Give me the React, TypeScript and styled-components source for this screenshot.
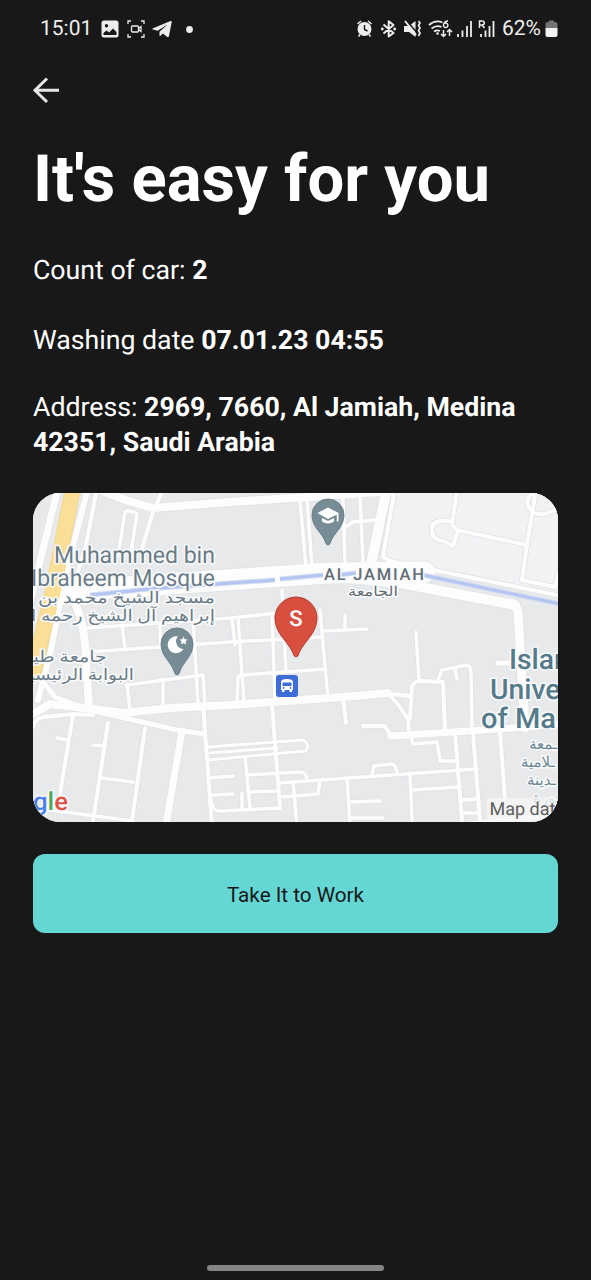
import React from "react";
import styled, { createGlobalStyle } from "styled-components";

const GlobalStyle = createGlobalStyle`
  * { box-sizing: border-box; }
  body { margin: 0; background: #181818; }
`;

const Screen = styled.div`
  display: flex;
  flex-direction: column;
  width: 100%;
  max-width: 591px;
  height: 1280px;
  background: #181818;
  color: #fff;
  font-family: Roboto, "Liberation Sans", sans-serif;
  text-rendering: geometricPrecision;
`;

const StatusBar = styled.header`
  display: flex;
  align-items: center;
  justify-content: space-between;
  height: 58px;
  padding: 0 33px 0 40px;
  color: #ededed;
`;

const StatusGroup = styled.div<{ $gap: number }>`
  display: flex;
  align-items: center;
  gap: ${(p) => p.$gap}px;
`;

const StatusText = styled.span<{ $width: number }>`
  width: ${(p) => p.$width}px;
  font-size: 21px;
  line-height: 26px;
  white-space: nowrap;
`;

const StatusIcon = styled.svg`
  display: block;
  flex: none;
  overflow: visible;
`;

const DotSlot = styled.div`
  margin-left: 6px;
`;

const Content = styled.main`
  display: flex;
  flex-direction: column;
  flex: 1;
  padding: 18px 33px 0;
`;

const BackButton = styled.button`
  width: 28px;
  height: 28px;
  padding: 0;
  border: 0;
  background: none;
  color: #e6e6e6;
`;

const Title = styled.h1`
  margin: 37px 0 0;
  font-size: 65.2px;
  font-weight: 700;
  line-height: 76px;
  white-space: nowrap;
`;

const Detail = styled.p<{ $top: number }>`
  margin: ${(p) => p.$top}px 0 0;
  font-size: 26.7px;
  line-height: 34.5px;
`;

const MapCard = styled.div`
  width: 525px;
  height: 329px;
  margin-top: 34px;
  border-radius: 27px;
  overflow: hidden;
  background: #e8e9eb;
`;

const MapSvg = styled.svg`
  display: block;
`;

const Label = styled.text<{ $size: number; $color?: string; $weight?: number }>`
  font-family: Roboto, "DejaVu Sans", sans-serif;
  font-size: ${(p) => p.$size}px;
  font-weight: ${(p) => p.$weight ?? 400};
  fill: ${(p) => p.$color ?? "#6a7c87"};
  stroke: #fafbfc;
  stroke-width: 3px;
  stroke-linejoin: round;
  paint-order: stroke;
`;

const PlainLabel = styled(Label)`
  stroke: none;
`;

const ActionButton = styled.button`
  width: 525px;
  height: 79px;
  margin-top: 32px;
  padding: 2px 0 0;
  border: 0;
  border-radius: 12px;
  background: #64d7d4;
  color: #181818;
  font-family: inherit;
  font-size: 20.7px;
`;

const HomeArea = styled.footer`
  display: flex;
  justify-content: center;
  height: 15px;
`;

const HomeHandle = styled.div`
  width: 177px;
  height: 6px;
  border-radius: 3px;
  background: #858585;
`;

type Road = [string, number];

const LANE = 3.5;

const roads: Road[] = [
  ["M58 488L30 602", 7],
  ["M88 488L65 577L51 650L38 700", 6],
  ["M97 488L86 545L72 592", 4],
  ["M102 491L128 501L153 508L230 502L310 497L392 491", 8],
  ["M163 490L153 512L141 552", 4],
  ["M118 556L125 512Q131 509 137 514L131 552", LANE],
  ["M68 592Q82 610 85 645L89 709", 8],
  ["M60 592L210 581L330 573L425 572", 21],
  ["M387 488L370 569", 10],
  ["M395 488L383 557L390 561L562 596", 4],
  ["M340 577L400 583L515 605", 10],
  ["M509 603Q517 604 518 613L525 728", 9],
  ["M300 500L306 567M307 499L312 567", LANE],
  ["M343 498L345 562M360 496L363 563M343 529L353 522L377 520", LANE],
  ["M457 490L452 525L457 530L527 545", 4],
  ["M452 521H439Q431 523 432 532Q433 540 443 541L453 546L458 531", 4],
  ["M536 490L527 545L522 580L555 587L561 565", 4],
  ["M532 494Q526 498 528 506Q534 516 545 514L558 509", 4],
  ["M88 628L230 618L277 613M88 652L230 642L323 637", LANE],
  ["M122 625L125 648M193 618L198 704M160 625L161 648", LANE],
  ["M232 618L235 645M238 618L244 702M272 613L275 701", LANE],
  ["M282 590L286 672M320 610L328 699M345 615V629M325 631L367 629", LANE],
  ["M237 703L238 677L242 675L325 669M127 685L203 675L205 705", LANE],
  ["M127 684L130 710M163 679V706", LANE],
  ["M30 716L50 704L93 709L123 713L170 708L230 705L343 697L388 693", 8],
  ["M43 682L55 697L90 710L177 730L204 734", 5],
  ["M33 727Q35 718 44 717L73 714L93 715", 4],
  ["M73 715L60 794M108 723L93 821M145 728L132 821", 4],
  ["M182 731L166 825", 7],
  ["M57 738L67 740M93 745L105 746M102 778L133 782M50 810L133 821", LANE],
  ["M203 704L212 826M272 704L280 808", 4],
  ["M208 747L303 740Q310 744 306 751L208 760M210 753L277 748", 3],
  ["M245 757L250 808M210 778L233 776M212 795L233 794M242 793V809", LANE],
  ["M211 799Q212 812 221 811L280 808M247 775L302 772Q307 774 307 780", LANE],
  ["M248 792L278 791M280 783L320 780L477 769M320 780L318 794L282 797", LANE],
  ["M293 782L297 825M347 778L350 825M350 802L380 801M350 818H383", LANE],
  ["M372 774L374 766L391 764Q396 764 397 773", LANE],
  ["M343 697L346 723M363 726H385L391 736L400 735", 4],
  ["M383 693L410 696M387 694Q394 697 408 719L409 733", 4],
  ["M416 632L419 681", LANE],
  ["M410 718L412 687Q413 682 420 681L443 682L445 729", 4],
  ["M438 680L442 670L467 665Q471 666 471 673L472 726M455 668L457 679", LANE],
  ["M391 736L513 728L560 724", 7],
  ["M411 738L413 744L437 742L440 761H455", LANE],
  ["M455 733L462 821M473 733L480 821M500 731L505 800", 4],
  ["M410 773L412 822M412 790L458 787M462 800L477 799M462 813H478", LANE],
  ["M498 663H522M460 825L558 814", 5],
];

const canal = "M90 595L160 588L275 580M280 579L323 575M339 575L356 573M423 575L560 604";

const Pin = ({ x, y, r, tip, fill, edge }: { x: number; y: number; r: number; tip: number; fill: string; edge: string }) => (
  <path
    d={`M${x} ${tip}Q${x - 2} ${tip} ${x - 3} ${tip - 4}C${x - r * 0.35} ${y + r * 1.15} ${x - r} ${y + r * 0.75} ${x - r} ${y}A${r} ${r} 0 0 1 ${x + r} ${y}C${x + r} ${y + r * 0.75} ${x + r * 0.35} ${y + r * 1.15} ${x + 3} ${tip - 4}Q${x + 2} ${tip} ${x} ${tip}Z`}
    fill={fill}
    stroke={edge}
    strokeWidth="1"
  />
);

const LocationMap = () => (
  <MapSvg width="525" height="329" viewBox="33 493 525 329">
    <rect x="33" y="493" width="525" height="329" fill="#e8e9eb" />
    <path d="M395 490L383 557L558 594V490Z" fill="#f1f2f4" />
    <g fill="none" strokeLinejoin="round" strokeLinecap="round">
      {roads.map(([d, w]) => (
        <path key={d} d={d} stroke="#e0e2e4" strokeWidth={w + 1.6} />
      ))}
      {roads.map(([d, w]) => (
        <path key={d} d={d} stroke="#fdfdfe" strokeWidth={w} />
      ))}
      <path d="M73 488L54 585L33 675" stroke="#f3d78d" strokeWidth="16" />
      <path d="M73 488L54 585L33 675" stroke="#fbdf96" strokeWidth="14" />
      <path d={canal} stroke="#d3dcf5" strokeWidth="5" strokeLinecap="butt" />
      <path d={canal} stroke="#b4c5f0" strokeWidth="3" strokeLinecap="butt" />
    </g>

    <Label $size={23.5} x="54" y="562.500" textLength="161" lengthAdjust="spacingAndGlyphs">Muhammed bin</Label>
    <Label $size={23.5} x="31" y="585.500" textLength="184" lengthAdjust="spacingAndGlyphs">Ibraheem Mosque</Label>
    <Label $size={16} x="38" y="603" textLength="177" lengthAdjust="spacingAndGlyphs">مسجد الشيخ محمد بن</Label>
    <Label $size={16} x="31" y="621" textLength="184" lengthAdjust="spacingAndGlyphs">إبراهيم آل الشيخ رحمه ا</Label>
    <Label $size={16} x="22" y="662" textLength="85" lengthAdjust="spacingAndGlyphs">جامعة طيبـ</Label>
    <Label $size={16} x="24" y="680" textLength="110" lengthAdjust="spacingAndGlyphs">البوابة الرئيسيـ</Label>
    <Label $size={16.5} $weight={500} $color="#626d76" x="324" y="580" textLength="100">AL JAMIAH</Label>
    <Label $size={13.5} $color="#626d76" x="348" y="596" textLength="50" lengthAdjust="spacingAndGlyphs">الجامعة</Label>

    <Label $size={28.3} $weight={500} $color="#557b8b" x="509" y="669">Islam</Label>
    <Label $size={28.3} $weight={500} $color="#557b8b" x="490" y="699">Unive</Label>
    <Label $size={28.3} $weight={500} $color="#557b8b" x="481" y="728" textLength="75" lengthAdjust="spacingAndGlyphs">of Ma</Label>
    <Label $size={15} $color="#6d8793" x="529" y="749">ـمعة</Label>
    <Label $size={15} $color="#6d8793" x="521" y="767">ـلامية</Label>
    <Label $size={15} $color="#6d8793" x="527" y="785">ـدينة</Label>
    <Label $size={15} $color="#6d8793" x="533" y="803">ـورة</Label>

    <Pin x={177} y={644} r={16} tip={675} fill="#788c96" edge="#687d88" />
    <path d="M178 636.5A8.5 8.5 0 1 0 183.500 649A7.500 7.500 0 0 1 178 636.500Z" fill="#fff" />
    <path d="M183.500 636.500L184.700 639.200L187.700 639.500L185.500 641.500L186.200 644.500L183.500 643L181 644.500L181.600 641.500L179.500 639.500L182.400 639.200Z" fill="#fff" />

    <Pin x={328} y={515} r={16} tip={545} fill="#788c96" edge="#687d88" />
    <path d="M317.500 513L328 507.500L338.500 513V521.500H336.800V514.500L328 519Z" fill="#fff" />
    <path d="M322 518L328 521L334 518V521.500Q328 525.500 322 521.500Z" fill="#fff" />

    <Pin x={296} y={618} r={21} tip={657} fill="#d94f3f" edge="#b23c30" />
    <PlainLabel $size={22} $weight={500} $color="#fff" x="296" y="626" textAnchor="middle">S</PlainLabel>

    <rect x="276" y="675" width="22" height="22" rx="3" fill="#3d6bd8" />
    <path d="M281 682Q281 679 287 679T293 682V690H292V692H289.500V690H284.500V692H282V690H281Z" fill="#fff" />
    <path d="M282.500 682.500H291.500V686H282.500Z" fill="#3d6bd8" />
    <circle cx="283.500" cy="688" r="0.900" fill="#3d6bd8" />
    <circle cx="290.500" cy="688" r="0.900" fill="#3d6bd8" />

    <Label $size={25} $weight={500} x="33" y="810" textLength="35" lengthAdjust="spacingAndGlyphs">
      <tspan fill="#4c80ed">g</tspan>
      <tspan fill="#4aa65a">l</tspan>
      <tspan fill="#e15448">e</tspan>
    </Label>
    <rect x="487" y="798" width="71" height="24" fill="#f5f5f6" fillOpacity="0.8" />
    <PlainLabel $size={18} $color="#5e5e5e" x="489.500" y="815">Map data</PlainLabel>
  </MapSvg>
);

const PictureIcon = () => (
  <StatusIcon width="18" height="18" viewBox="0 0 18 18">
    <path fill="currentColor" fillRule="evenodd" d="M3 0.500H15Q17.500 0.500 17.500 3V15Q17.500 17.500 15 17.500H3Q0.500 17.500 0.500 15V3Q0.500 0.500 3 0.500ZM5.500 4A1.700 1.700 0 1 0 5.500 7.400A1.700 1.700 0 1 0 5.500 4ZM2.500 15H15.500V12L12 8.500L8 12.500L5.500 10.500L2.500 13Z" />
  </StatusIcon>
);

const CaptureIcon = () => (
  <StatusIcon width="18" height="18" viewBox="0 0 18 18" fill="none" stroke="currentColor" strokeWidth="1.300">
    <path d="M1 4V1H4M14 1H17V4M17 14V17H14M4 17H1V14" />
    <rect x="4.500" y="6" width="7" height="6" rx="1" />
    <path d="M11.500 8.500L14 6.500V11.500L11.500 9.500" />
  </StatusIcon>
);

const TelegramIcon = () => (
  <StatusIcon width="19" height="18" viewBox="1 0 19 18">
    <path fill="currentColor" d="M0.500 8.500L18.500 1Q20 0.600 19.700 2L17 16Q16.600 17.800 15 16.800L10.800 13.600L8.800 15.500Q7.500 16.500 7.500 15V11.800L15.500 4.500L5.700 10.800L1 9.600Q-0.300 9.100 0.500 8.500Z" />
  </StatusIcon>
);

const DotIcon = () => (
  <StatusIcon width="7" height="7" viewBox="0 0 7 7">
    <circle cx="3.500" cy="3.500" r="3.400" fill="currentColor" />
  </StatusIcon>
);

const StatusSymbols = () => (
  <StatusIcon width="142" height="20" viewBox="356 19 142 20" fill="none" stroke="currentColor" strokeWidth="1.600">
    <circle cx="364.500" cy="29" r="7" fill="currentColor" stroke="none" />
    <path d="M357.500 24L361 21M371.500 24L368 21M360 34.500L358.500 36.500M369 34.500L370.500 36.500" />
    <path d="M364.500 25V29.500L367.500 31" stroke="#181818" strokeWidth="1.400" />

    <path d="M383.500 24.500L393.500 33L388.700 36.500V21.300L393.500 25L383.500 33.500" strokeLinejoin="round" strokeWidth="2" />
    <circle cx="382.300" cy="29" r="1.400" fill="currentColor" stroke="none" />
    <circle cx="394.700" cy="29" r="1.400" fill="currentColor" stroke="none" />

    <path d="M404 26H409L415.500 21V37L409 32H404Z" fill="currentColor" stroke="none" />
    <path d="M406.500 20.500L418 34" stroke="#181818" strokeWidth="1.600" />
    <path d="M405 21L416 35" strokeWidth="1.900" />
    <path d="M418.500 21L420 23L418.500 25.500L420 28L418.500 30.500L420 33L418.500 36" strokeWidth="1.700" />

    <path d="M429 25Q435.500 19.500 442.500 22.500M431.500 28.500Q436.500 24.500 441.500 27M434 31.500Q437 29.500 440 31" strokeWidth="1.700" />
    <circle cx="437.500" cy="33.500" r="1.300" fill="currentColor" stroke="none" />
    <path d="M448 21Q444 21 443.500 25.200A2.200 2.200 0 1 0 444.500 23.500" strokeWidth="1.400" />
    <path d="M443.500 30V36M441 34L443.500 36.500L446 34M449.500 36V30M447 32L449.500 29.500L452 32" strokeWidth="1.500" />

    <path d="M458 34V37M462.500 30.500V37M467 26V37M471 21V37" strokeWidth="1.800" />
    <path d="M479.500 28V21H482Q484.300 21 484.300 23T482 25H479.500M482 25L484.500 28" strokeWidth="1.500" />
    <path d="M481 34V37M485.500 30.500V37M489.500 26V37M493.500 21V37" strokeWidth="1.800" />
  </StatusIcon>
);

const BatteryIcon = () => (
  <StatusIcon width="13" height="18" viewBox="0 0 13 18">
    <path d="M2.500 2H4V0.500H9V2H10.500Q12.500 2 12.500 4V9H0.500V4Q0.500 2 2.500 2Z" fill="#747474" />
    <path d="M0.500 8H12.500V15Q12.500 17 10.500 17H2.500Q0.500 17 0.500 15Z" fill="#f2f2f2" />
  </StatusIcon>
);

export default function App() {
  return (
    <Screen>
      <GlobalStyle />
      <StatusBar>
        <StatusGroup $gap={8}>
          <StatusText $width={53}>15:01</StatusText>
          <PictureIcon />
          <CaptureIcon />
          <TelegramIcon />
          <DotSlot>
            <DotIcon />
          </DotSlot>
        </StatusGroup>
        <StatusGroup $gap={4}>
          <StatusSymbols />
          <StatusText $width={39}>62%</StatusText>
          <BatteryIcon />
        </StatusGroup>
      </StatusBar>
      <Content>
        <BackButton aria-label="Back">
          <StatusIcon width="28" height="28" viewBox="0 0 28 28" fill="none" stroke="currentColor" strokeWidth="3">
            <path d="M26 14.300H2M14 2.500L2 14.300L14 26" />
          </StatusIcon>
        </BackButton>
        <Title>It's easy for you</Title>
        <Detail $top={36}>
          Count of car: <b>2</b>
        </Detail>
        <Detail $top={35}>
          Washing date <b>07.01.23 04:55</b>
        </Detail>
        <Detail $top={33}>
          Address: <b>2969, 7660, Al Jamiah, Medina 42351, Saudi Arabia</b>
        </Detail>
        <MapCard>
          <LocationMap />
        </MapCard>
        <ActionButton>Take It to Work</ActionButton>
      </Content>
      <HomeArea>
        <HomeHandle />
      </HomeArea>
    </Screen>
  );
}
